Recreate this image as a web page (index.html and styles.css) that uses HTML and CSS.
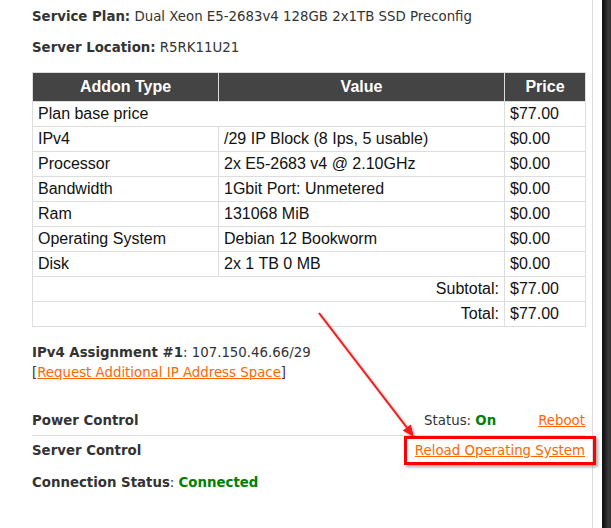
FILE: index.html
```html
<!DOCTYPE html>
<html>
<head>
<meta charset="utf-8">
<link rel="stylesheet" href="styles.css">
</head>
<body>
<div class="screen">
  <div class="page">
    <div class="content">
      <p class="info first"><b>Service Plan:</b> Dual Xeon E5-2683v4 128GB 2x1TB SSD Preconfig</p>
      <p class="info second"><b>Server Location:</b> R5RK11U21</p>
      <table class="addons">
        <colgroup><col class="c1"><col class="c2"><col class="c3"></colgroup>
        <thead>
          <tr><th>Addon Type</th><th>Value</th><th>Price</th></tr>
        </thead>
        <tbody>
          <tr><td colspan="2">Plan base price</td><td>$77.00</td></tr>
          <tr><td>IPv4</td><td>/29 IP Block (8 Ips, 5 usable)</td><td>$0.00</td></tr>
          <tr><td>Processor</td><td>2x E5-2683 v4 @ 2.10GHz</td><td>$0.00</td></tr>
          <tr><td>Bandwidth</td><td>1Gbit Port: Unmetered</td><td>$0.00</td></tr>
          <tr><td>Ram</td><td>131068 MiB</td><td>$0.00</td></tr>
          <tr><td>Operating System</td><td>Debian 12 Bookworm</td><td>$0.00</td></tr>
          <tr><td>Disk</td><td>2x 1 TB 0 MB</td><td>$0.00</td></tr>
          <tr><td colspan="2" class="right">Subtotal:</td><td>$77.00</td></tr>
          <tr><td colspan="2" class="right">Total:</td><td>$77.00</td></tr>
        </tbody>
      </table>
      <div class="ipv4">
        <p class="ipline"><b>IPv4 Assignment #1</b>: 107.150.46.66/29</p>
        <p class="ipline">[<a href="#">Request Additional IP Address Space</a>]</p>
      </div>
      <div class="controls">
        <div class="ctrl-row divided">
          <span class="label">Power Control</span>
          <span class="status">Status: <b class="ok">On</b></span>
          <a class="action" href="#">Reboot</a>
        </div>
        <div class="ctrl-row">
          <span class="label">Server Control</span>
          <a class="action" href="#">Reload Operating System</a>
        </div>
      </div>
      <p class="info conn"><b>Connection Status</b>: <b class="ok">Connected</b></p>
    </div>
  </div>
  <div class="gap"></div>
  <div class="edge"></div>
  <div class="highlight"></div>
  <svg class="annot" width="611" height="528" viewBox="0 0 611 528">
    <defs>
      <filter id="sh" x="-20%" y="-20%" width="140%" height="140%">
        <feDropShadow dx="1.5" dy="1.5" stdDeviation="1" flood-color="#000" flood-opacity="0.35"/>
      </filter>
    </defs>
    <g filter="url(#sh)">
      <line x1="319" y1="313" x2="408" y2="429" stroke="#ee1c1c" stroke-width="2"/>
      <polygon points="414,437 410.7,424.5 402.7,430.5" fill="#ee1c1c"/>
    </g>
  </svg>
</div>
</body>
</html>
```
FILE: styles.css
```css
html, body {
  margin: 0;
  padding: 0;
  background: #fff;
}
.screen {
  position: relative;
  width: 611px;
  height: 528px;
  display: flex;
  overflow: hidden;
}
.page {
  width: 592px;
  border-right: 1px solid #dcdcdc;
  flex: none;
}
.content {
  padding: 0 7px 0 32px;
  font-family: "DejaVu Sans", Verdana, sans-serif;
  font-size: 13.33px;
  color: #333;
}
.gap {
  width: 9px;
  flex: none;
}
.edge {
  width: 9px;
  flex: none;
  background: linear-gradient(to right, #111 0%, #1c1c1c 30%, #3a3a3a 70%, #2e2e2e 100%);
}
.info {
  margin: 0;
  line-height: 16px;
}
.info b { font-weight: bold; }
.first { padding-top: 9px; }
.second { margin-top: 15px; }
.addons {
  margin-top: 16px;
  width: 553px;
  border-collapse: collapse;
  table-layout: fixed;
  font-family: "Liberation Sans", Arial, sans-serif;
  font-size: 16px;
  color: #111;
}
.c1 { width: 186px; }
.c2 { width: 286px; }
.c3 { width: 81px; }
.addons th {
  background: #444;
  color: #fff;
  font-weight: bold;
  height: 28px;
  padding: 0;
  border: 1px solid #ddd;
  text-align: center;
}
.addons td {
  height: 24px;
  padding: 0 5px;
  border: 1px solid #ddd;
  white-space: nowrap;
}
.addons td.right { text-align: right; }
.ipv4 { margin-top: 16px; }
.ipline {
  margin: 0;
  line-height: 20px;
}
a {
  color: #ff6600;
  text-decoration: underline;
}
.controls { margin-top: 22px; }
.ctrl-row {
  display: flex;
  align-items: center;
  height: 30px;
}
.ctrl-row.divided {
  border-bottom: 1px solid #ddd;
}
.ctrl-row + .ctrl-row { height: 29px; }
.label {
  flex: 1;
  font-weight: bold;
}
.action { margin-left: 42px; }
.ok { color: #008000; font-weight: bold; }
.conn { margin-top: 10px; }
.highlight {
  position: absolute;
  left: 404px;
  top: 436px;
  width: 186px;
  height: 23px;
  border: 3px solid #f00;
  box-shadow: 2px 2px 3px rgba(0,0,0,0.35);
  pointer-events: none;
}
.annot {
  position: absolute;
  left: 0;
  top: 0;
  pointer-events: none;
}
```
